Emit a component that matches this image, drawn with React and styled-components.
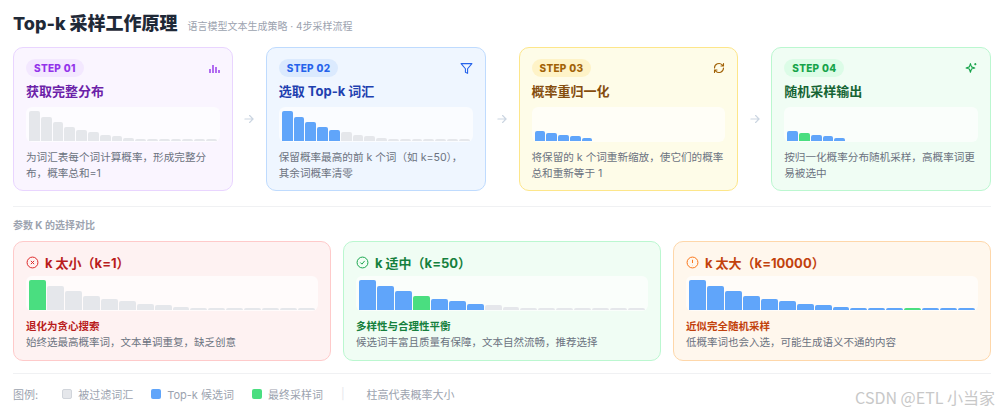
import React from "react";
import styled, { createGlobalStyle } from "styled-components";

const G = createGlobalStyle`
  body{margin:0;background:#fff;font-family:Inter,"Noto Sans CJK SC",sans-serif;}
`;
const Page = styled.div`padding:9px 9px 0 13px;position:relative;height:415px;box-sizing:border-box;`;
const Head = styled.div`display:flex;align-items:baseline;gap:10px;height:26px;`;
const Title = styled.h1`margin:0;font-size:18px;font-weight:800;color:#1f2937;`;
const Sub = styled.span`font-size:10px;color:#9ca3af;`;
const Steps = styled.div`display:flex;align-items:center;margin-top:12px;`;
const Arrow = styled.div`width:33px;display:flex;justify-content:center;color:#cbd5e1;`;
const Card = styled.div`
  width:220px;height:144px;box-sizing:border-box;border-radius:10px;padding:11px 12px;
  background:${p=>p.bg};border:1px solid ${p=>p.bd};display:flex;flex-direction:column;
`;
const Top = styled.div`display:flex;justify-content:space-between;align-items:center;color:${p=>p.c};`;
const Pill = styled.span`font-size:10px;font-weight:800;padding:3px 8px;border-radius:10px;background:${p=>p.bg};color:${p=>p.c};letter-spacing:.3px;`;
const H3 = styled.div`font-size:13px;font-weight:700;color:${p=>p.c};margin:4px 0 7px;`;
const Chart = styled.div`
  height:35px;flex:none;box-sizing:border-box;border-radius:6px;background:rgba(255,255,255,.65);
  display:flex;align-items:flex-end;gap:1px;padding:0 3px 1px;
`;
const Bar = styled.div`flex:1;border-radius:2px 2px 0 0;background:${p=>p.c};`;
const Desc = styled.div`font-size:10.6px;color:#6b7280;line-height:16px;margin-top:8px;`;
const Hr = styled.div`height:1px;background:#f0f1f3;margin:${p=>p.m};`;
const Label = styled.div`font-size:10px;font-weight:700;color:#9ca3af;`;
const Cmp = styled.div`display:grid;grid-template-columns:repeat(3,1fr);gap:12px;margin-top:9px;`;
const CCard = styled.div`
  height:120px;box-sizing:border-box;border-radius:10px;padding:11px 12px;
  background:${p=>p.bg};border:1px solid ${p=>p.bd};
`;
const CHead = styled.div`display:flex;align-items:center;gap:6px;font-size:13px;font-weight:700;color:${p=>p.c};margin-bottom:4px;`;
const CT = styled.div`font-size:10.5px;font-weight:700;color:${p=>p.c};margin-top:7px;`;
const CD = styled.div`font-size:10.5px;color:#6b7280;margin-top:1px;`;
const Legend = styled.div`display:flex;align-items:center;font-size:11px;color:#9ca3af;`;
const Item = styled.span`display:flex;align-items:center;gap:6px;margin-right:${p=>p.mr||18}px;`;
const Sw = styled.span`width:10px;height:10px;border-radius:2px;background:${p=>p.c};border:${p=>p.b||"none"};box-sizing:border-box;`;
const Wm = styled.div`position:absolute;right:5px;bottom:6px;font-size:16px;color:#c8c8c8;font-family:"Noto Sans CJK SC",sans-serif;`;

const GR="#e5e7eb",BL="#60a5fa",GN="#4ade80";
const H=[30,24,19,14,11,9,6,5,3,2,2,2,2,2,2,2];
const Bars=({c,h=H})=> <Chart>{h.map((v,i)=><Bar key={i} c={c(i)} style={{height:v}}/>)}</Chart>;

const steps=[
 {n:"01",t:"获取完整分布",bg:"#faf5ff",bd:"#e9d5ff",pb:"#f3e8ff",pc:"#9333ea",tc:"#6b21a8",
  ic:<svg width="12" height="12" viewBox="0 0 12 12" stroke="currentColor" strokeWidth="1.4"><path d="M2 11V7M5 11V3M8 11V5M11 11V8"/></svg>,
  c:()=>GR,d:"为词汇表每个词计算概率，形成完整分布，概率总和=1"},
 {n:"02",t:"选取 Top-k 词汇",bg:"#eff6ff",bd:"#bfdbfe",pb:"#dbeafe",pc:"#2563eb",tc:"#1e40af",
  ic:<svg width="13" height="13" viewBox="0 0 24 24" fill="none" stroke="currentColor" strokeWidth="2" strokeLinejoin="round"><path d="M22 3H2l8 9.46V19l4 2v-8.54L22 3z"/></svg>,
  c:i=>i<5?BL:GR,d:"保留概率最高的前 k 个词（如 k=50），其余词概率清零"},
 {n:"03",t:"概率重归一化",bg:"#fefce8",bd:"#fde68a",pb:"#fef3c7",pc:"#a16207",tc:"#854d0e",
  ic:<svg width="12" height="12" viewBox="0 0 24 24" fill="none" stroke="currentColor" strokeWidth="2.2" strokeLinecap="round"><path d="M21 12a9 9 0 0 1-15.5 6.2L3 16M3 12a9 9 0 0 1 15.5-6.2L21 8M21 3v5h-5M3 21v-5h5"/></svg>,
  c:i=>i<5?BL:"transparent",h:[10,8,6,5,3,1,1,1,1,1,1,1,1,1,1,1],d:"将保留的 k 个词重新缩放，使它们的概率总和重新等于 1"},
 {n:"04",t:"随机采样输出",bg:"#f0fdf4",bd:"#bbf7d0",pb:"#dcfce7",pc:"#16a34a",tc:"#166534",
  ic:<svg width="13" height="13" viewBox="0 0 24 24" fill="none" stroke="currentColor" strokeWidth="2" strokeLinejoin="round"><path d="M10 3l2 6 6 2-6 2-2 6-2-6-6-2 6-2zM19 2v4M17 4h4"/></svg>,
  c:i=>i===1?GN:i<5?BL:"transparent",h:[10,8,6,5,3,1,1,1,1,1,1,1,1,1,1,1],d:"按归一化概率分布随机采样，高概率词更易被选中"},
];
const cmps=[
 {t:"k 太小（k=1）",c:"#dc2626",hc:"#b91c1c",bg:"#fef2f2",bd:"#fecaca",
  ic:<svg width="13" height="13" viewBox="0 0 24 24" fill="none" stroke="currentColor" strokeWidth="1.8"><circle cx="12" cy="12" r="10"/><path d="M15 9l-6 6M9 9l6 6"/></svg>,
  f:i=>i===0?GN:GR,a:"退化为贪心搜索",b:"始终选最高概率词，文本单调重复，缺乏创意"},
 {t:"k 适中（k=50）",c:"#16a34a",hc:"#15803d",bg:"#f0fdf4",bd:"#bbf7d0",
  ic:<svg width="13" height="13" viewBox="0 0 24 24" fill="none" stroke="currentColor" strokeWidth="1.8"><circle cx="12" cy="12" r="10"/><path d="M8 12l3 3 5-6"/></svg>,
  f:i=>i===3?GN:i<7?BL:GR,a:"多样性与合理性平衡",b:"候选词丰富且质量有保障，文本自然流畅，推荐选择"},
 {t:"k 太大（k=10000）",c:"#f97316",hc:"#c2410c",bg:"#fff7ed",bd:"#fed7aa",
  ic:<svg width="13" height="13" viewBox="0 0 24 24" fill="none" stroke="currentColor" strokeWidth="1.8"><circle cx="12" cy="12" r="10"/><path d="M12 7v6M12 16.5v.5"/></svg>,
  f:i=>i===12?GN:BL,a:"近似完全随机采样",b:"低概率词也会入选，可能生成语义不通的内容"},
];

export default function App(){
  return <Page><G/>
    <Head><Title>Top-k 采样工作原理</Title><Sub>语言模型文本生成策略 · 4步采样流程</Sub></Head>
    <Steps>{steps.map((s,i)=><React.Fragment key={i}>
      {i>0&&<Arrow><svg width="14" height="14" viewBox="0 0 24 24" fill="none" stroke="currentColor" strokeWidth="2" strokeLinecap="round"><path d="M5 12h14M13 6l6 6-6 6"/></svg></Arrow>}
      <Card bg={s.bg} bd={s.bd}>
        <Top c={s.pc}><Pill bg={s.pb} c={s.pc}>STEP {s.n}</Pill>{s.ic}</Top>
        <H3 c={s.tc}>{s.t}</H3>
        <Bars c={s.c} h={s.h}/>
        <Desc>{s.d}</Desc>
      </Card></React.Fragment>)}
    </Steps>
    <Hr m="15px 0 10px"/>
    <Label>参数 K 的选择对比</Label>
    <Cmp>{cmps.map((c,i)=><CCard key={i} bg={c.bg} bd={c.bd}>
      <CHead c={c.hc}><span style={{color:c.c,display:"flex"}}>{c.ic}</span>{c.t}</CHead>
      <Bars c={c.f}/>
      <CT c={c.hc}>{c.a}</CT><CD>{c.b}</CD>
    </CCard>)}</Cmp>
    <Hr m="12px 0 12px"/>
    <Legend>
      <Item mr={24}>图例:</Item>
      <Item><Sw c="#e5e7eb" b="1px solid #d1d5db"/>被过滤词汇</Item>
      <Item><Sw c={BL}/>Top-k 候选词</Item>
      <Item><Sw c={GN}/>最终采样词</Item>
      <Item mr={22} style={{color:"#e5e7eb"}}>|</Item>
      <Item>柱高代表概率大小</Item>
    </Legend>
    <Wm>CSDN @ETL 小当家</Wm>
  </Page>;
}
